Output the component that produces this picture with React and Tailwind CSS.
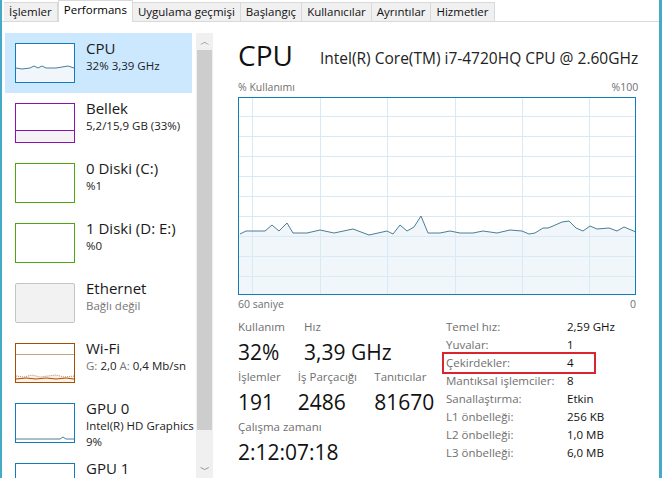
const font = { fontFamily: '"Open Sans", "Noto Sans", sans-serif' };

const tabs = [
  "İşlemler",
  "Performans",
  "Uygulama geçmişi",
  "Başlangıç",
  "Kullanıcılar",
  "Ayrıntılar",
  "Hizmetler",
];

const cpuPts = [
  [1, 136], [7, 133], [26, 133], [33, 127], [40, 133], [48, 125], [54, 135],
  [68, 135], [81, 132], [95, 135], [114, 131], [130, 137], [148, 133], [154, 136],
  [161, 127], [168, 133], [175, 129], [182, 118], [189, 135], [201, 135], [211, 133],
  [221, 135], [234, 135], [244, 133], [258, 135], [271, 132], [283, 133], [290, 136],
  [296, 135], [304, 130], [309, 130], [314, 128], [323, 124], [330, 123], [337, 130],
  [344, 133], [351, 128], [358, 131], [370, 130], [378, 133], [385, 129], [397, 134],
];

function MainGraph() {
  const w = 396;
  const h = 196;
  const line = cpuPts.map((p) => p.join(",")).join(" ");
  const area = `0,${h} 0,136 ${line} ${w},134 ${w},${h}`;
  const vx = [13, 81, 148, 216, 283, 350];
  const hy = [18, 38, 58, 78, 98, 118, 138, 158, 178];
  return (
    <svg width={w} height={h} className="block">
      <polygon points={area} fill="#f1f6fa" />
      {vx.map((x) => (
        <line key={x} x1={x + 0.5} y1={0} x2={x + 0.5} y2={h} stroke="#d9eaf4" strokeWidth="1" />
      ))}
      {hy.map((y) => (
        <line key={y} x1={0} y1={y + 0.5} x2={w} y2={y + 0.5} stroke="#d9eaf4" strokeWidth="1" />
      ))}
      <polyline points={line} fill="none" stroke="#4a7e98" strokeWidth="1" />
    </svg>
  );
}

function Thumb({ kind }) {
  if (kind === "cpu")
    return (
      <div className="w-[60px] h-[40px] border border-[#117dbb] bg-white">
        <svg width="58" height="38" className="block">
          <polygon points="0,38 0,24 6,25 14,24 18,22 22,24 26,22 30,24 40,24 46,23 52,22 58,24 58,38" fill="#f1f6fa" />
          <polyline points="0,24 6,25 14,24 18,22 22,24 26,22 30,24 40,24 46,23 52,22 58,24" fill="none" stroke="#4a7e98" strokeWidth="1" />
        </svg>
      </div>
    );
  if (kind === "mem")
    return (
      <div className="w-[60px] h-[40px] border border-[#8b12ae] bg-white flex flex-col justify-end">
        <div className="h-[12px] border-t border-[#8b12ae] bg-[#f4f2f4]" />
      </div>
    );
  if (kind === "disk")
    return <div className="w-[60px] h-[40px] border border-[#4da60c] bg-white" />;
  if (kind === "eth")
    return <div className="w-[60px] h-[40px] border border-[#c4c4c4] rounded-[2px] bg-[#f2f2f2]" />;
  if (kind === "wifi")
    return (
      <div className="w-[60px] h-[40px] border border-[#a74f01] bg-white">
        <svg width="58" height="38" className="block">
          <line x1="0" y1="10.5" x2="58" y2="10.5" stroke="#c9a27f" strokeWidth="1" />
          <polygon points="0,38 0,32 8,33 16,31 24,33 32,32 40,31 48,33 58,32 58,38" fill="#fbf1e8" />
          <polyline points="0,32 8,33 16,31 24,33 32,32 40,31 48,33 58,32" fill="none" stroke="#c08a5a" strokeWidth="1" strokeDasharray="1 1" />
          <polyline points="0,35 10,34 20,35 30,34 40,35 50,34 58,35" fill="none" stroke="#a74f01" strokeWidth="1" />
        </svg>
      </div>
    );
  return (
    <div className="w-[60px] h-[40px] border border-[#117dbb] bg-white">
      <svg width="58" height="38" className="block">
        <polyline points="0,35 44,35 47,33 50,35 58,35" fill="none" stroke="#4a7e98" strokeWidth="1" />
      </svg>
    </div>
  );
}

const items = [
  { kind: "cpu", title: "CPU", sub: "32% 3,39 GHz", active: true },
  { kind: "mem", title: "Bellek", sub: "5,2/15,9 GB (33%)" },
  { kind: "disk", title: "0 Diski (C:)", sub: "%1" },
  { kind: "disk", title: "1 Diski (D: E:)", sub: "%0" },
  { kind: "eth", title: "Ethernet", sub: "Bağlı değil", muted: true },
  { kind: "wifi", title: "Wi-Fi", sub: "wifi" },
  { kind: "gpu", title: "GPU 0", sub: "Intel(R) HD Graphics", sub2: "9%" },
  { kind: "gpu", title: "GPU 1", sub: "" },
];

function SideItem({ it }) {
  return (
    <div
      className={`h-[60px] w-[187px] shrink-0 flex items-start pt-[10px] pl-[10px] gap-[11px] ${
        it.active ? "bg-[#cce8ff]" : ""
      }`}
    >
      <Thumb kind={it.kind} />
      <div className="flex flex-col leading-none -mt-[5px] whitespace-nowrap">
        <span className="text-[15px] text-[#1a1a1a] leading-[20px]">{it.title}</span>
        {it.sub === "wifi" ? (
          <span className="text-[11.5px] text-[#222] leading-[16px]">
            <span className="text-[#777]">G:</span> 2,0 <span className="text-[#777]">A:</span> 0,4 Mb/sn
          </span>
        ) : (
          <span className={`text-[11.5px] leading-[16px] ${it.muted ? "text-[#777]" : "text-[#222]"}`}>
            {it.sub}
          </span>
        )}
        {it.sub2 && <span className="text-[11.5px] text-[#222] leading-[15px]">{it.sub2}</span>}
      </div>
    </div>
  );
}

const specs = [
  ["Temel hız:", "2,59 GHz"],
  ["Yuvalar:", "1"],
  ["Çekirdekler:", "4"],
  ["Mantıksal işlemciler:", "8"],
  ["Sanallaştırma:", "Etkin"],
  ["L1 önbelleği:", "256 KB"],
  ["L2 önbelleği:", "1,0 MB"],
  ["L3 önbelleği:", "6,0 MB"],
];

function Stat({ label, value, w }) {
  return (
    <div className={`flex flex-col ${w}`}>
      <span className="text-[11.5px] text-[#707070] leading-[16px]">{label}</span>
      <span className="text-[21px] text-[#111] leading-[34px]">{value}</span>
    </div>
  );
}

export default function App() {
  return (
    <div
      style={font}
      className="w-[662px] h-[478px] bg-white overflow-hidden flex flex-col border-l-2 border-r-[3px] border-[#45aac6]"
    >
      {/* tabs */}
      <div className="h-[22px] shrink-0 flex items-end border-b border-[#d9d9d9] pl-[2px]">
        {tabs.map((t) =>
          t === "Performans" ? (
            <div
              key={t}
              className="h-[22px] -mb-px px-[5px] bg-white border-x border-t border-[#d9d9d9] text-[11.5px] text-black leading-[18px]"
            >
              {t}
            </div>
          ) : (
            <div
              key={t}
              className="h-[19px] px-[5px] bg-[#f0f0f0] border-r border-t border-[#d9d9d9] text-[11.5px] text-[#111] leading-[18px]"
            >
              {t}
            </div>
          )
        )}
      </div>

      <div className="flex flex-1 min-h-0">
        {/* sidebar */}
        <div className="w-[194px] shrink-0 pt-[11px] pl-[3px] flex flex-col overflow-hidden">
          {items.map((it) => (
            <SideItem key={it.title} it={it} />
          ))}
        </div>
        <div className="w-[17px] shrink-0 mt-[11px] bg-[#f0f0f0] flex flex-col items-center">
          <div className="h-[17px] text-[10px] text-[#606060] leading-[17px]">︿</div>
          <div className="w-[15px] h-[380px] bg-[#cdcdcd]" />
          <div className="flex-1" />
          <div className="h-[17px] text-[10px] text-[#606060] leading-[17px]">﹀</div>
        </div>

        {/* main */}
        <div className="flex-1 pl-[25px] pr-[22px] pt-[17px] flex flex-col">
          <div className="flex items-end h-[32px] whitespace-nowrap">
            <span className="text-[28px] leading-[32px] text-[#111] w-[82px]">CPU</span>
            <span className="text-[15.5px] leading-[20px] text-[#222] mb-[3px]">
              Intel(R) Core(TM) i7-4720HQ CPU @ 2.60GHz
            </span>
          </div>
          <div className="flex justify-between text-[10.5px] text-[#707070] leading-[14px] mt-[9px]">
            <span>% Kullanımı</span>
            <span>%100</span>
          </div>
          <div className="mt-[3px] w-[398px] h-[198px] border border-[#117dbb]">
            <MainGraph />
          </div>
          <div className="flex justify-between text-[10.5px] text-[#707070] leading-[14px] mt-[2px] w-[398px]">
            <span>60 saniye</span>
            <span>0</span>
          </div>

          <div className="flex mt-[8px]">
            <div className="w-[205px] flex flex-col">
              <div className="flex">
                <Stat label="Kullanım" value="32%" w="w-[66px]" />
                <Stat label="Hız" value="3,39 GHz" w="w-[100px]" />
              </div>
              <div className="flex">
                <Stat label="İşlemler" value="191" w="w-[61px]" />
                <Stat label="İş Parçacığı" value="2486" w="w-[78px]" />
                <Stat label="Tanıtıcılar" value="81670" w="w-[70px]" />
              </div>
              <Stat label="Çalışma zamanı" value="2:12:07:18" w="" />
            </div>
            <div className="flex flex-col -mt-[1px]">
              {specs.map(([k, v]) => (
                <div
                  key={k}
                  className={`flex h-[18px] items-center text-[11.5px] pl-[3px] ${
                    k === "Çekirdekler:"
                      ? "outline-2 outline-[#d9252e] -outline-offset-1 w-[152px] h-[20px] -my-px"
                      : ""
                  }`}
                >
                  <span className="w-[121px] text-[#707070]">{k}</span>
                  <span className="text-[#111]">{v}</span>
                </div>
              ))}
            </div>
          </div>
        </div>
      </div>
    </div>
  );
}
